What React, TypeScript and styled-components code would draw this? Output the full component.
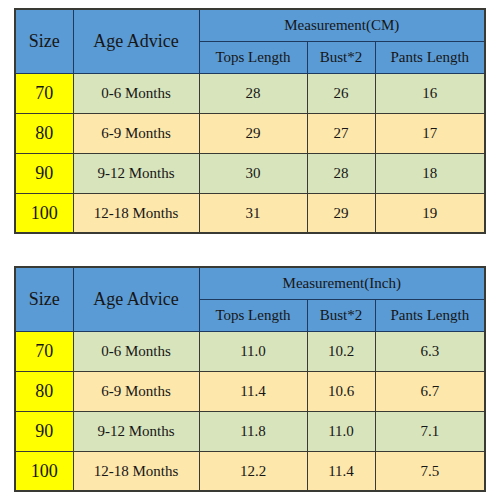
import React from 'react';
import styled, { createGlobalStyle } from 'styled-components';

const serif = `'Liberation Serif', 'DejaVu Serif', serif`;

const GlobalStyle = createGlobalStyle`
  html, body {
    margin: 0;
    padding: 0;
    background: #ffffff;
  }
  body {
    font-family: ${serif};
    color: #161616;
  }
`;

const Page = styled.div`
  width: 500px;
  height: 500px;
  padding: 8px 0 0 14px;
  box-sizing: border-box;
  display: flex;
  flex-direction: column;
  gap: 32px;
`;

const Table = styled.table`
  width: 470px;
  border-collapse: collapse;
  table-layout: fixed;
  border: 2px solid #3a3a34;
  font-family: ${serif};
  color: #161616;
`;

const HeadCell = styled.th<{ $big?: boolean; $h: number }>`
  background: #5b9bd5;
  border: 1.5px solid #1f3a5f;
  font-family: ${serif};
  font-weight: normal;
  font-size: ${(p) => (p.$big ? '18px' : '15px')};
  height: ${(p) => p.$h}px;
  padding: 0;
  text-align: center;
  vertical-align: middle;
`;

const Row = styled.tr<{ $tone: 'green' | 'peach' }>`
  background: ${(p) => (p.$tone === 'green' ? '#d8e4bc' : '#fde7ab')};
`;

const SizeCell = styled.td`
  background: #ffff00;
  border: 1.5px solid #3a3a34;
  font-family: ${serif};
  font-size: 18px;
  text-align: center;
  padding: 0;
`;

const Cell = styled.td<{ $h: number }>`
  border: 1.5px solid #3a3a34;
  font-family: ${serif};
  font-size: 15px;
  text-align: center;
  height: ${(p) => p.$h}px;
  padding: 0;
`;

type SizeRow = [string, string, string, string, string];

const cmRows: SizeRow[] = [
  ['70', '0-6 Months', '28', '26', '16'],
  ['80', '6-9 Months', '29', '27', '17'],
  ['90', '9-12 Months', '30', '28', '18'],
  ['100', '12-18 Months', '31', '29', '19'],
];

const inchRows: SizeRow[] = [
  ['70', '0-6 Months', '11.0', '10.2', '6.3'],
  ['80', '6-9 Months', '11.4', '10.6', '6.7'],
  ['90', '9-12 Months', '11.8', '11.0', '7.1'],
  ['100', '12-18 Months', '12.2', '11.4', '7.5'],
];

const SizeTable: React.FC<{ unit: string; rows: SizeRow[]; rowH: number[] }> = ({ unit, rows, rowH }) => (
  <Table>
    <colgroup>
      <col style={{ width: 58 }} />
      <col style={{ width: 126 }} />
      <col style={{ width: 108 }} />
      <col style={{ width: 68 }} />
      <col style={{ width: 110 }} />
    </colgroup>
    <thead>
      <tr>
        <HeadCell rowSpan={2} $big $h={31}>Size</HeadCell>
        <HeadCell rowSpan={2} $big $h={31}>Age Advice</HeadCell>
        <HeadCell colSpan={3} $h={31}>Measurement({unit})</HeadCell>
      </tr>
      <tr>
        <HeadCell $h={31}>Tops Length</HeadCell>
        <HeadCell $h={31}>Bust*2</HeadCell>
        <HeadCell $h={31}>Pants Length</HeadCell>
      </tr>
    </thead>
    <tbody>
      {rows.map((r, i) => (
        <Row key={r[0]} $tone={i % 2 === 0 ? 'green' : 'peach'}>
          <SizeCell>{r[0]}</SizeCell>
          <Cell $h={rowH[i]}>{r[1]}</Cell>
          <Cell $h={rowH[i]}>{r[2]}</Cell>
          <Cell $h={rowH[i]}>{r[3]}</Cell>
          <Cell $h={rowH[i]}>{r[4]}</Cell>
        </Row>
      ))}
    </tbody>
  </Table>
);

const App: React.FC = () => (
  <>
    <GlobalStyle />
    <Page>
      <SizeTable unit="CM" rows={cmRows} rowH={[39, 39, 39, 38]} />
      <SizeTable unit="Inch" rows={inchRows} rowH={[39, 39, 39, 38]} />
    </Page>
  </>
);

export default App;
